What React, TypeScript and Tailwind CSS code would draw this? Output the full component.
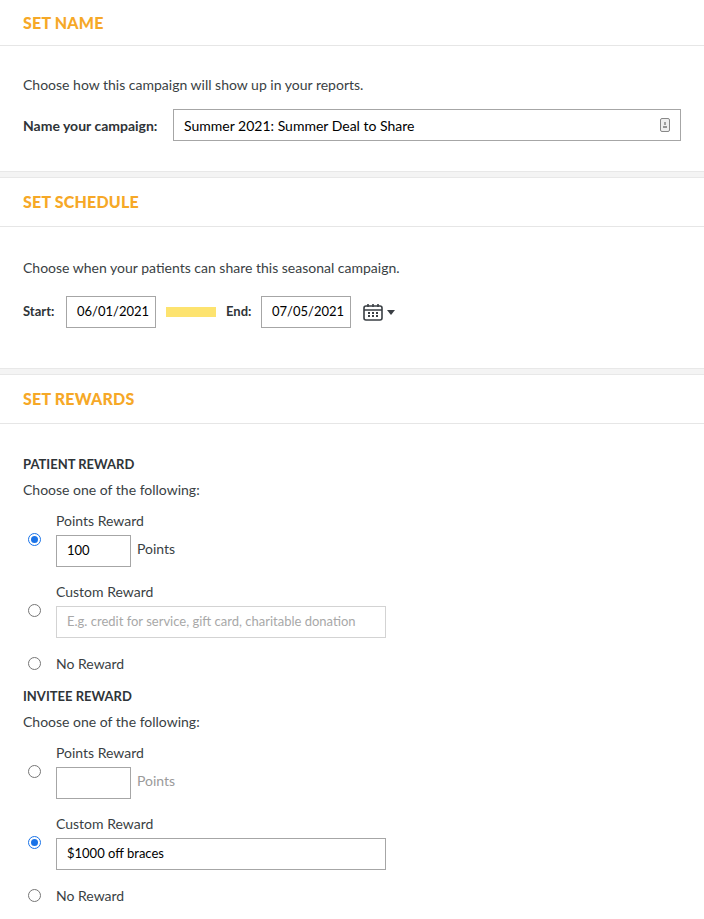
import React from "react";

const Radio = ({ on }: { on?: boolean }) =>
  on ? (
    <span className="block w-[13px] h-[13px] rounded-full border border-[#1a73e8] bg-white flex items-center justify-center">
      <span className="block w-[7px] h-[7px] rounded-full bg-[#1a73e8]" />
    </span>
  ) : (
    <span className="block w-[13px] h-[13px] rounded-full border border-[#767676] bg-white" />
  );

const Header = ({ t, h }: { t: string; h: string }) => (
  <div className={h + " border-b border-[#e6e6e6] flex items-center px-[23px]"}>
    <span className="text-[16px] font-black text-[#f6a827] tracking-[0.2px]">{t}</span>
  </div>
);

const Gap = () => <div className="h-[7px] bg-[#f4f4f4] border-y border-[#e8e8e8]" />;

function Block({ title, points, custom }: { title: string; points?: string; custom?: string }) {
  const sel = points ? "p" : custom ? "c" : "n";
  return (
    <div>
      <div className="text-[13px] font-bold text-[#2f3438] h-[20px] leading-[20px]">{title}</div>
      <div className="mt-[6px] h-[20px] leading-[20px]">Choose one of the following:</div>
      <div className="flex mt-[11px]">
        <div className="w-[33px] pt-[22px] pl-[5px]"><Radio on={sel === "p"} /></div>
        <div>
          <div className="h-[20px] leading-[20px]">Points Reward</div>
          <div className="flex items-start mt-[4px] gap-[6px]">
            <div className="w-[75px] h-[32px] border border-[#a6a6a6] px-[10px] flex items-center text-[13px] text-black">{points}</div>
            <span className={"mt-[3px] " + (sel === "p" ? "" : "text-[#9a9a9a]")}>Points</span>
          </div>
        </div>
      </div>
      <div className="flex mt-[15px]">
        <div className="w-[33px] pt-[22px] pl-[5px]"><Radio on={sel === "c"} /></div>
        <div>
          <div className="h-[20px] leading-[20px]">Custom Reward</div>
          <div className={"w-[330px] h-[32px] mt-[4px] border px-[10px] flex items-center text-[13px] " + (custom ? "border-[#a6a6a6] text-black" : "border-[#d3d3d3] text-[#a8a8a8]")}>
            {custom || "E.g. credit for service, gift card, charitable donation"}
          </div>
        </div>
      </div>
      <div className="flex items-center mt-[15px] h-[20px]">
        <div className="w-[33px] pl-[5px] flex"><Radio /></div>
        <span>No Reward</span>
      </div>
    </div>
  );
}

export default function App() {
  return (
    <div className="w-[704px] h-[919px] bg-white text-[14px] text-[#3a3f44] overflow-hidden" style={{ fontFamily: "Lato, 'Noto Sans', sans-serif" }}>
      <Header t="SET NAME" h="h-[46px]" />
      <div className="px-[23px] pt-[29px] h-[125px]">
        <div className="h-[20px] leading-[20px]">Choose how this campaign will show up in your reports.</div>
        <div className="flex items-center mt-[14px]">
          <span className="font-bold text-[#2f3438] w-[150px]">Name your campaign:</span>
          <div className="flex-1 h-[32px] border border-[#a6a6a6] px-[10px] flex items-center justify-between text-black">
            <span>Summer 2021: Summer Deal to Share</span>
            <svg width="10" height="14" viewBox="0 0 10 14"><rect x="0.5" y="0.5" width="9" height="13" rx="1.5" fill="#eee" stroke="#888" /><path d="M5 4v3M3 9h4" stroke="#777" strokeWidth="1.3" /></svg>
          </div>
        </div>
      </div>
      <Gap />
      <Header t="SET SCHEDULE" h="h-[49px]" />
      <div className="px-[23px] pt-[31px] h-[141px]">
        <div className="h-[20px] leading-[20px]">Choose when your patients can share this seasonal campaign.</div>
        <div className="flex items-center mt-[18px] text-[13px]">
          <span className="font-bold text-[#2f3438] w-[43px]">Start:</span>
          <div className="w-[90px] h-[32px] border border-[#a6a6a6] px-[10px] flex items-center text-black">06/01/2021</div>
          <div className="w-[50px] h-[10px] bg-[#fde36f] ml-[10px] mr-[10px]" />
          <span className="font-bold text-[#2f3438] w-[35px]">End:</span>
          <div className="w-[90px] h-[32px] border border-[#a6a6a6] px-[10px] flex items-center text-black">07/05/2021</div>
          <svg className="ml-[12px]" width="20" height="18" viewBox="0 0 20 18" fill="none" stroke="#3a3f44" strokeWidth="1.6">
            <rect x="1" y="3" width="18" height="14" rx="2" />
            <path d="M1 7h18M5 1v3M10 1v3M15 1v3" />
            <path d="M5 10h2M9 10h2M13 10h2M5 13h2M9 13h2M13 13h2" strokeWidth="1.8" />
          </svg>
          <svg className="ml-[4px]" width="8" height="5" viewBox="0 0 8 5"><path d="M0 0h8L4 5z" fill="#3a3f44" /></svg>
        </div>
      </div>
      <Gap />
      <Header t="SET REWARDS" h="h-[49px]" />
      <div className="px-[23px] pt-[30px]">
        <Block title="PATIENT REWARD" points="100" />
        <div className="h-[13px]" />
        <Block title="INVITEE REWARD" custom="$1000 off braces" />
      </div>
    </div>
  );
}
